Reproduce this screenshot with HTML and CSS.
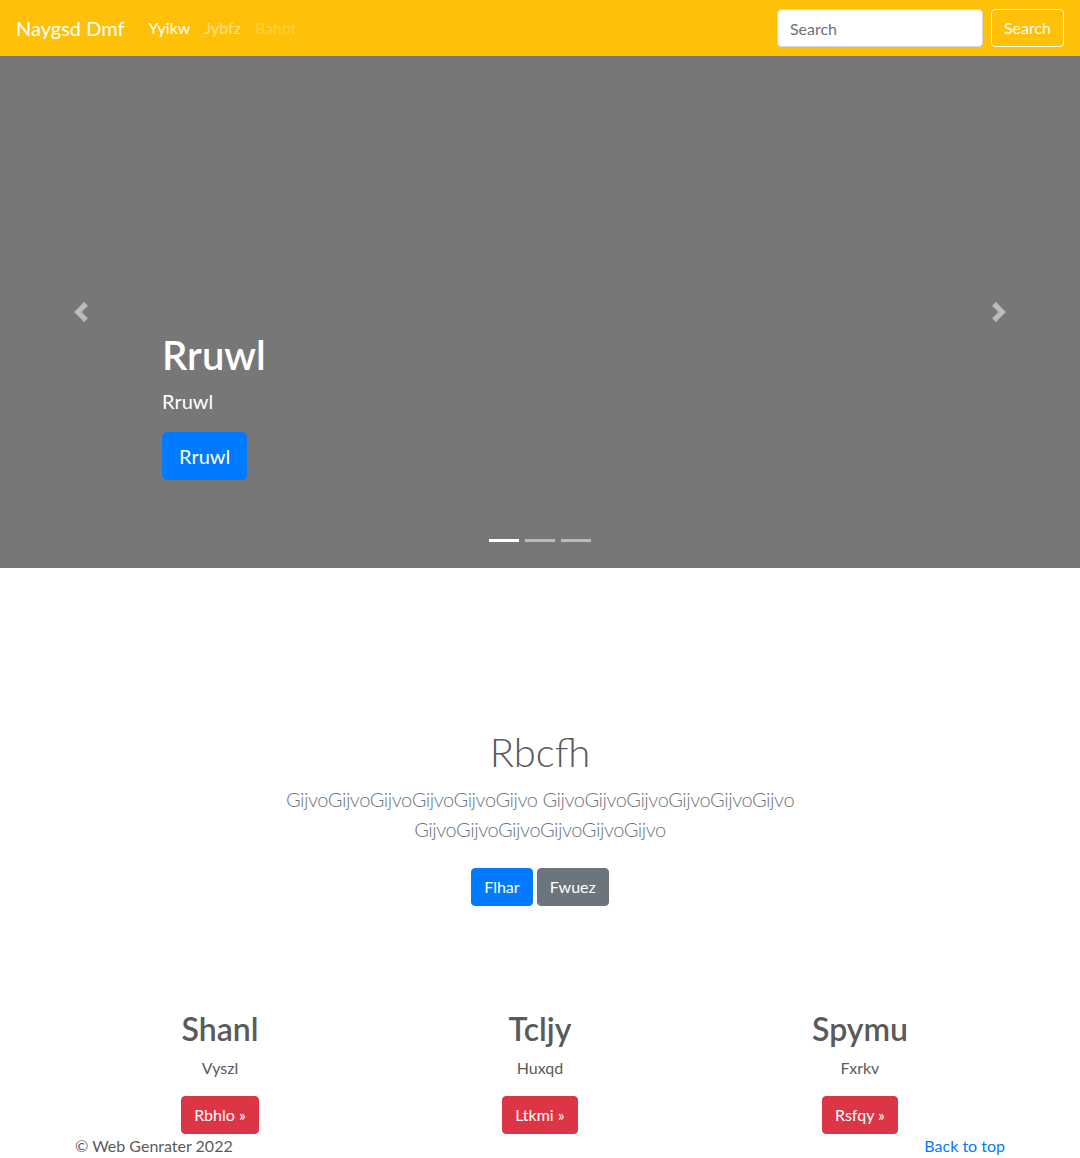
FILE: index.html
```html
<!DOCTYPE html>
<html lang="en">
<head>
<meta charset="utf-8">
<title>Naygsd Dmf</title>
<link rel="stylesheet" href="styles.css">
</head>
<body>
<header class="navbar">
  <a class="brand" href="#">Naygsd Dmf</a>
  <ul class="nav">
    <li><a class="nav-link active" href="#">Yyikw</a></li>
    <li><a class="nav-link" href="#">Jybfz</a></li>
    <li><a class="nav-link disabled" href="#">Bahbt</a></li>
  </ul>
  <form class="search">
    <input class="search-input" type="text" placeholder="Search">
    <button class="btn btn-outline-light" type="button">Search</button>
  </form>
</header>

<section class="carousel">
  <div class="slide">
    <div class="caption">
      <h1 class="caption-title">Rruwl</h1>
      <p class="caption-text">Rruwl</p>
      <p class="caption-action"><a class="btn btn-lg btn-primary" href="#">Rruwl</a></p>
    </div>
  </div>
  <ol class="indicators">
    <li class="active"></li>
    <li></li>
    <li></li>
  </ol>
  <a class="control control-prev" href="#">
    <svg class="control-icon" viewBox="0 0 8 8" width="20" height="20"><path fill="#fff" d="M5.25 0l-4 4 4 4 1.5-1.5L4.25 4l2.5-2.5L5.25 0z"/></svg>
  </a>
  <a class="control control-next" href="#">
    <svg class="control-icon" viewBox="0 0 8 8" width="20" height="20"><path fill="#fff" d="M2.75 0l-1.5 1.5L3.75 4l-2.5 2.5L2.75 8l4-4-4-4z"/></svg>
  </a>
</section>

<section class="jumbotron">
  <h1 class="jumbotron-heading">Rbcfh</h1>
  <p class="lead">GijvoGijvoGijvoGijvoGijvoGijvo GijvoGijvoGijvoGijvoGijvoGijvo GijvoGijvoGijvoGijvoGijvoGijvo</p>
  <p class="jumbotron-actions">
    <a class="btn btn-primary" href="#">Flhar</a>
    <a class="btn btn-secondary" href="#">Fwuez</a>
  </p>
</section>

<section class="marketing">
  <div class="feature">
    <h2 class="feature-title">Shanl</h2>
    <p class="feature-text">Vyszl</p>
    <p class="feature-action"><a class="btn btn-danger" href="#">Rbhlo &raquo;</a></p>
  </div>
  <div class="feature">
    <h2 class="feature-title">Tcljy</h2>
    <p class="feature-text">Huxqd</p>
    <p class="feature-action"><a class="btn btn-danger" href="#">Ltkmi &raquo;</a></p>
  </div>
  <div class="feature">
    <h2 class="feature-title">Spymu</h2>
    <p class="feature-text">Fxrkv</p>
    <p class="feature-action"><a class="btn btn-danger" href="#">Rsfqy &raquo;</a></p>
  </div>
</section>

<footer class="footer">
  <p class="footer-copy">&copy; Web Genrater 2022</p>
  <p class="footer-top"><a href="#">Back to top</a></p>
</footer>
</body>
</html>
```
FILE: styles.css
```css
* { box-sizing: border-box; }

body {
  margin: 0;
  font-family: "Lato", "Liberation Sans", sans-serif;
  font-size: 16px;
  line-height: 1.5;
  color: #5a5a5a;
  background: #fff;
}

a { text-decoration: none; }

/* Navbar */
.navbar {
  height: 56px;
  display: flex;
  align-items: center;
  padding: 8px 16px;
  background: #ffc107;
}
.brand {
  font-size: 20px;
  line-height: 30px;
  color: #fff;
  margin-right: 17px;
}
.nav {
  display: flex;
  list-style: none;
  margin: 0;
  padding: 0;
  flex: 1;
}
.nav-link {
  display: block;
  padding: 8px 7px;
  color: rgba(255, 255, 255, 0.5);
}
.nav-link.active { color: #fff; }
.nav-link.disabled { color: rgba(255, 255, 255, 0.25); }

.search { display: flex; align-items: center; margin: 0; }
.search-input {
  width: 206px;
  height: 38px;
  padding: 6px 12px;
  font: inherit;
  color: #495057;
  background: #fff;
  border: 1px solid #ced4da;
  border-radius: 4px;
  margin-right: 8px;
}
.search-input::placeholder { color: #6c757d; }

/* Buttons */
.btn {
  display: inline-block;
  font: inherit;
  font-size: 16px;
  line-height: 24px;
  padding: 6px 12px;
  border: 1px solid transparent;
  border-radius: 4px;
  color: #fff;
  text-align: center;
  vertical-align: middle;
  cursor: pointer;
}
.btn-lg {
  font-size: 20px;
  line-height: 30px;
  padding: 8px 16px;
  border-radius: 5px;
}
.btn-outline-light {
  background: transparent;
  color: #f8f9fa;
  border-color: #f8f9fa;
}
.btn-primary { background: #007bff; border-color: #007bff; }
.btn-secondary { background: #6c757d; border-color: #6c757d; }
.btn-danger { background: #dc3545; border-color: #dc3545; }

/* Carousel */
.carousel {
  position: relative;
  height: 512px;
  background: #777;
  margin-bottom: 64px;
}
.slide {
  height: 100%;
  display: flex;
  align-items: flex-end;
  padding: 0 15% 48px;
}
.caption {
  padding: 20px 0;
  color: #fff;
  text-align: left;
}
.caption-title {
  margin: 0 0 7px;
  font-size: 40px;
  line-height: 1.2;
  font-weight: 600;
}
.caption-text {
  margin: 0 0 16px;
  font-size: 20px;
  line-height: 30px;
}
.caption-action { margin: 0 0 20px; line-height: 0; }

.indicators {
  position: absolute;
  left: 0;
  right: 0;
  bottom: 0;
  margin: 0 0 16px;
  padding: 0;
  list-style: none;
  display: flex;
  justify-content: center;
}
.indicators li {
  width: 30px;
  height: 23px;
  margin: 0 3px;
  border-top: 10px solid transparent;
  border-bottom: 10px solid transparent;
  background: #fff;
  background-clip: padding-box;
  opacity: 0.5;
}
.indicators li.active { opacity: 1; }

.control {
  position: absolute;
  top: 0;
  bottom: 0;
  width: 15%;
  display: flex;
  align-items: center;
  justify-content: center;
  opacity: 0.5;
}
.control-prev { left: 0; }
.control-next { right: 0; }
.control-icon { display: block; }

/* Jumbotron */
.jumbotron {
  padding: 96px 16px;
  text-align: center;
}
.jumbotron-heading {
  margin: 0 0 8px;
  font-size: 40px;
  line-height: 1.2;
  font-weight: 300;
  color: #5a5a5a;
}
.lead {
  max-width: 560px;
  margin: 0 auto 16px;
  font-size: 20px;
  line-height: 30px;
  font-weight: 300;
  letter-spacing: -0.47px;
  color: #6c757d;
}
.jumbotron-actions { margin: 0; }
.jumbotron-actions .btn { margin: 8px 0; }

/* Marketing */
.marketing {
  width: 960px;
  margin: 0 auto;
  display: grid;
  grid-template-columns: repeat(3, 1fr);
}
.feature {
  padding: 0 15px;
  text-align: center;
}
.feature-title {
  margin: 0 0 8px;
  font-size: 32px;
  line-height: 1.2;
  font-weight: 600;
}
.feature-text { margin: 0 12px 16px; }
.feature-action { margin: 0; line-height: 0; }

/* Footer */
.footer {
  width: 960px;
  margin: 0 auto;
  padding: 0 15px;
  display: flex;
  justify-content: space-between;
}
.footer p { margin: 0; }
.footer-top a { color: #007bff; }
```
